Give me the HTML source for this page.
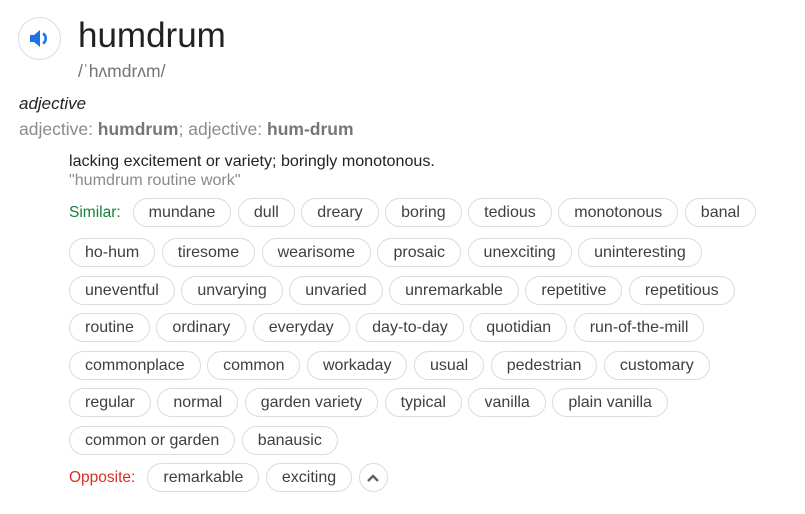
<!DOCTYPE html>
<html><head><meta charset="utf-8"><style>
body{margin:0;width:805px;height:514px;background:#fff;font-family:"Liberation Sans",Arial,sans-serif;position:relative;overflow:hidden}
.spk{position:absolute;left:18px;top:17px;width:43px;height:43px;border:1px solid #dadce0;border-radius:50%;box-sizing:border-box}
.word{position:absolute;left:78px;top:16px;font-size:35px;color:#222}
.ipa{position:absolute;left:78px;top:61px;font-size:17.5px;color:#70757a}
.pos{position:absolute;left:19px;top:94px;font-size:17px;font-style:italic;color:#222}
.forms{position:absolute;left:19px;top:119px;font-size:17.5px;color:#8a8a8a}
.forms b{color:#777}
.def{position:absolute;left:69px;top:152px;font-size:16.1px;color:#222}
.ex{position:absolute;left:69px;top:171px;font-size:16.1px;color:#8a8a8a}
.row{position:absolute;left:69px;display:flex;align-items:center;gap:6.5px}
.c{height:29px;box-sizing:border-box;border:1px solid #dadce0;border-radius:15px;padding:0 15px;font-size:16px;color:#3c4043;line-height:27px;white-space:nowrap}
.lab{font-size:15.5px;margin-right:5.5px}
</style></head><body>
<div class="spk"><svg width="41" height="41" viewBox="0 0 41 41"><path d="M11 17h4l6-5v17l-6-5h-4z" fill="#1a73e8"/><path d="M24 15.5a6 6 0 0 1 0 10" stroke="#1a73e8" stroke-width="2.6" fill="none"/></svg></div>
<div class="word">humdrum</div>
<div class="ipa">/ˈhʌmdrʌm/</div>
<div class="pos">adjective</div>
<div class="forms">adjective: <b>humdrum</b>; adjective: <b>hum-drum</b></div>
<div class="def">lacking excitement or variety; boringly monotonous.</div>
<div class="ex">"humdrum routine work"</div>
<div class="row" style="top:198px"><span class="lab" style="color:#188038">Similar:</span><span class="c">mundane</span><span class="c">dull</span><span class="c">dreary</span><span class="c">boring</span><span class="c">tedious</span><span class="c">monotonous</span><span class="c">banal</span></div>
<div class="row" style="top:238px"><span class="c">ho-hum</span><span class="c">tiresome</span><span class="c">wearisome</span><span class="c">prosaic</span><span class="c">unexciting</span><span class="c">uninteresting</span></div>
<div class="row" style="top:276px"><span class="c">uneventful</span><span class="c">unvarying</span><span class="c">unvaried</span><span class="c">unremarkable</span><span class="c">repetitive</span><span class="c">repetitious</span></div>
<div class="row" style="top:313px"><span class="c">routine</span><span class="c">ordinary</span><span class="c">everyday</span><span class="c">day-to-day</span><span class="c">quotidian</span><span class="c">run-of-the-mill</span></div>
<div class="row" style="top:351px"><span class="c">commonplace</span><span class="c">common</span><span class="c">workaday</span><span class="c">usual</span><span class="c">pedestrian</span><span class="c">customary</span></div>
<div class="row" style="top:388px"><span class="c">regular</span><span class="c">normal</span><span class="c">garden variety</span><span class="c">typical</span><span class="c">vanilla</span><span class="c">plain vanilla</span></div>
<div class="row" style="top:426px"><span class="c">common or garden</span><span class="c">banausic</span></div>
<div class="row" style="top:463px"><span class="lab" style="color:#d93025">Opposite:</span><span class="c">remarkable</span><span class="c">exciting</span><span class="c" style="width:29px;padding:0;display:flex;align-items:center;justify-content:center"><svg width="14" height="10" viewBox="0 0 14 10"><path d="M2 8l5-5 5 5" stroke="#5f6368" stroke-width="2.4" fill="none"/></svg></span></div>
</body></html>
